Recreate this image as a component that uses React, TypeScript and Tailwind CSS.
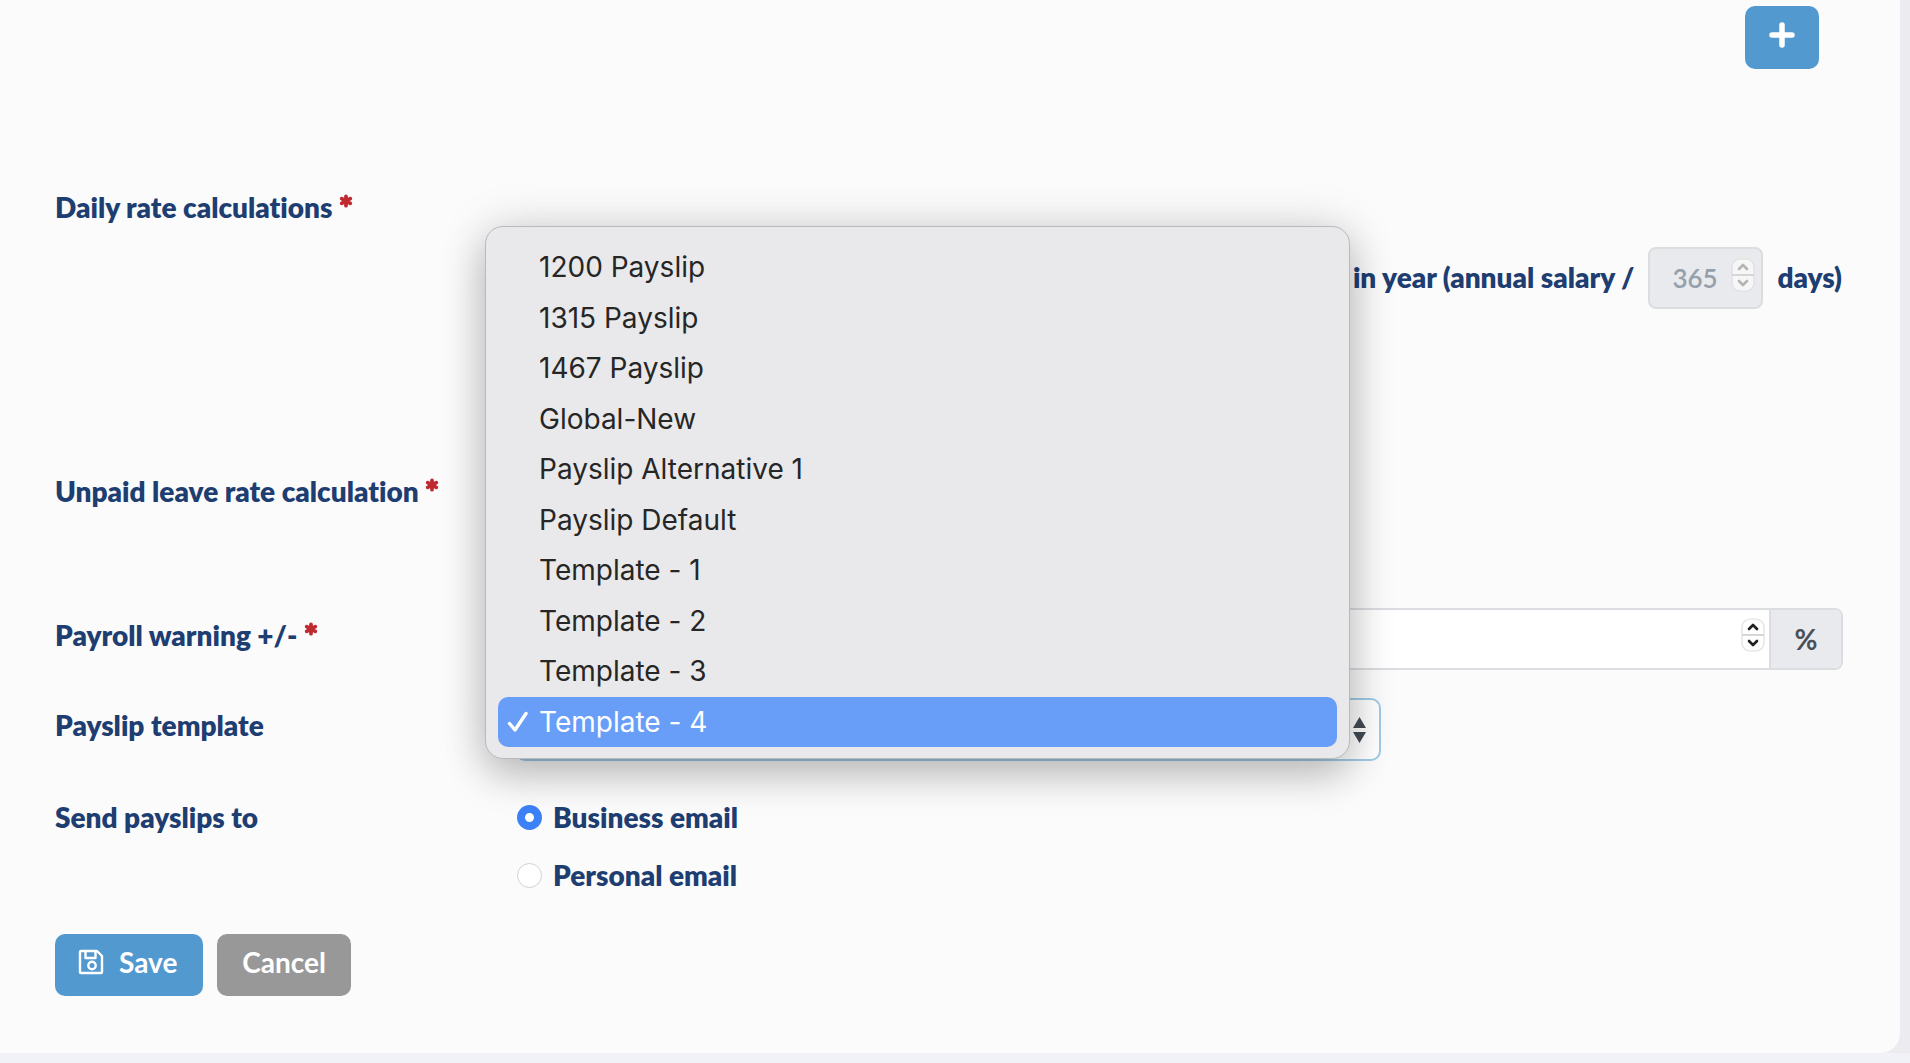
import { useState } from "react";
import type { ReactNode } from "react";

const templates = [
  "1200 Payslip",
  "1315 Payslip",
  "1467 Payslip",
  "Global-New",
  "Payslip Alternative 1",
  "Payslip Default",
  "Template - 1",
  "Template - 2",
  "Template - 3",
  "Template - 4",
];

function Required() {
  return (
    <svg viewBox="0 0 12 12" className="mt-[3px] ml-1.5 h-3.5 w-3.5 shrink-0" aria-label="required" role="img">
      <path d="M6 2v8M2.300 4l7.400 4M9.700 4l-7.400 4" stroke="#bf2a31" strokeWidth="3.200" strokeLinecap="round" />
    </svg>
  );
}

function FieldLabel({ htmlFor, required, children }: { htmlFor?: string; required?: boolean; children: ReactNode }) {
  return (
    <div className="flex w-[460px] shrink-0 items-start">
      <label htmlFor={htmlFor}>{children}</label>
      {required && <Required />}
    </div>
  );
}

function Stepper({ muted }: { muted?: boolean }) {
  return (
    <svg
      viewBox="0 0 24 34"
      className={muted ? "h-[34px] w-6 shrink-0 text-[#b4b4b4]" : "h-[34px] w-6 shrink-0 text-[#222]"}
      aria-hidden="true"
    >
      <rect x="1" y="1" width="22" height="32" rx="8" fill={muted ? "#f6f6f7" : "#fff"} stroke="#dedede" strokeWidth="1.2" />
      <path d="M1 17h22" stroke="#d6d6d6" strokeWidth="2" />
      <path d="M8 11l4-4 4 4M8 23l4 4 4-4" fill="none" stroke="currentColor" strokeWidth="2.6" strokeLinecap="round" strokeLinejoin="round" />
    </svg>
  );
}

function TemplateSelect() {
  const [value, setValue] = useState("Template - 4");

  return (
    <div className="relative w-[866px]">
      <select
        id="template"
        value={value}
        onChange={(e) => setValue(e.target.value)}
        className="h-[63px] w-full appearance-none rounded-[10px] border-2 border-[#9fcbe6] bg-white px-6 text-[26px] font-medium text-[#495057]"
      >
        {templates.map((t) => (
          <option key={t}>{t}</option>
        ))}
      </select>
      <svg viewBox="0 0 13 26" className="absolute top-[19px] right-[15px] h-[26px] w-[13px]" aria-hidden="true">
        <path d="M6.500 0L13 11H0zM6.500 26L13 15H0z" fill="#444b54" />
      </svg>

      <ul
        role="listbox"
        aria-label="Payslip template"
        className="absolute bottom-0.5 -left-[30px] z-10 grid h-[533px] w-[865px] auto-rows-fr rounded-[18px] border border-[#b9b9bb] bg-[#e9e9eb] px-3 pt-[15px] pb-[11px] font-['Inter',sans-serif] text-[28px] font-normal text-[#262626] shadow-[0_0_50px_rgba(0,0,0,0.12),0_16px_40px_rgba(0,0,0,0.22)]"
      >
        {templates.map((t) => (
          <li
            key={t}
            role="option"
            aria-selected={t === value}
            onClick={() => setValue(t)}
            className={
              t === value
                ? "flex items-center rounded-[10px] bg-[#689df8] pl-2 text-white"
                : "flex items-center pl-2"
            }
          >
            <span className="w-[33px]">
              {t === value && (
                <svg viewBox="0 0 24 24" className="h-6 w-6" aria-hidden="true">
                  <path d="M3.500 13.500L9 20 20 3.500" fill="none" stroke="currentColor" strokeWidth="3.400" strokeLinecap="round" strokeLinejoin="round" />
                </svg>
              )}
            </span>
            {t}
          </li>
        ))}
      </ul>
    </div>
  );
}

function EmailOption({ label, checked, onSelect }: { label: string; checked: boolean; onSelect: () => void }) {
  return (
    <label className="flex items-center gap-[11px]">
      <input
        type="radio"
        name="send-to"
        checked={checked}
        onChange={onSelect}
        className="h-[25px] w-[25px] appearance-none rounded-full border border-[#d2d2d2] bg-white checked:border-8 checked:border-[#3c82f6]"
      />
      {label}
    </label>
  );
}

export default function App() {
  const [warning, setWarning] = useState("");
  const [sendTo, setSendTo] = useState("business");

  return (
    <div className="min-h-screen overflow-x-hidden bg-[#f1f2f7] font-['Lato',sans-serif] text-[28px] leading-8 font-extrabold text-[#1e3e72] [font-variant-ligatures:none]">
      <div className="bg-[#ecebf0] pr-2.5">
        <form
          onSubmit={(e) => e.preventDefault()}
          className="flex flex-col rounded-br-[20px] bg-[#fbfbfb] pt-1.5 pr-[57px] pb-[57px] pl-[55px]"
        >
          <div className="flex justify-end pr-6">
            <button type="button" aria-label="Add" className="flex h-[63px] w-[74px] justify-center rounded-[10px] bg-[#5199cf] pt-4">
              <svg viewBox="0 0 26 26" className="h-[26px] w-[26px]" aria-hidden="true">
                <path d="M13 3v20M3 13h20" stroke="#fff" strokeWidth="5.500" strokeLinecap="round" />
              </svg>
            </button>
          </div>

          <div className="mt-[122px] flex">
            <FieldLabel htmlFor="days" required>Daily rate calculations</FieldLabel>
          </div>
          <div className="mt-6 flex items-center justify-end pr-px">
            <label htmlFor="days" className="pb-0.5">in year (annual salary /</label>
            <div className="mx-3.5 flex h-[62px] w-[115px] items-start rounded-lg border-2 border-[#dcdddd] bg-[#e9eaee] pt-[9px] pr-1.5 pl-[22px]">
              <input
                id="days"
                type="text"
                value="365"
                disabled
                className="h-10 w-full min-w-0 text-[26px] font-semibold text-[#94a0ac]"
              />
              <Stepper muted />
            </div>
            <span className="pb-0.5">days)</span>
          </div>

          <div className="mt-[166px] flex">
            <FieldLabel required>Unpaid leave rate calculation</FieldLabel>
          </div>

          <div className="mt-[101px] flex items-start">
            <div className="pt-[11px]">
              <FieldLabel htmlFor="warning" required>Payroll warning +/-</FieldLabel>
            </div>
            <div className="flex h-[62px] flex-1 rounded-lg border-2 border-[#dcdde0] bg-white">
              <input
                id="warning"
                type="text"
                value={warning}
                onChange={(e) => setWarning(e.target.value)}
                className="min-w-0 flex-1 px-6 text-[26px] font-medium text-[#495057] outline-none"
              />
              <div className="pt-2 pr-1">
                <Stepper />
              </div>
              <span className="flex w-[72px] items-center justify-center rounded-r-md border-l-2 border-[#dcdde0] bg-[#e9eaee] font-bold text-[#495057]">
                %
              </span>
            </div>
          </div>

          <div className="mt-7 flex items-start">
            <div className="pt-[11px]">
              <FieldLabel htmlFor="template">Payslip template</FieldLabel>
            </div>
            <TemplateSelect />
          </div>

          <div className="mt-10 flex items-start">
            <FieldLabel>Send payslips to</FieldLabel>
            <div className="flex flex-col gap-[26px] pl-0.5">
              <EmailOption label="Business email" checked={sendTo === "business"} onSelect={() => setSendTo("business")} />
              <EmailOption label="Personal email" checked={sendTo === "personal"} onSelect={() => setSendTo("personal")} />
            </div>
          </div>

          <div className="mt-[43px] flex gap-3.5 font-bold text-white">
            <button type="submit" className="flex h-[62px] items-center gap-[15px] rounded-[10px] bg-[#5199cf] pr-[26px] pb-1.5 pl-[23px]">
              <svg viewBox="0 0 26 26" className="h-[26px] w-[26px]" fill="none" stroke="currentColor" strokeWidth="2.400" strokeLinejoin="round" aria-hidden="true">
                <path d="M3 2h16l5 5v16q0 1-1 1H3q-1 0-1-1V3q0-1 1-1z" />
                <path d="M7.500 2v7h10V2" />
                <circle cx="14" cy="16.500" r="3.700" />
              </svg>
              Save
            </button>
            <button type="button" className="h-[62px] rounded-[10px] bg-[#989898] px-[25px] pb-1.5">Cancel</button>
          </div>
        </form>
      </div>
    </div>
  );
}
